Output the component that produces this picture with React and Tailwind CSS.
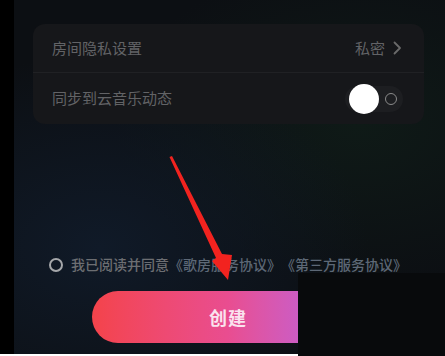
import React from 'react';

function Chevron() {
  return (
    <svg width="9" height="14" viewBox="0 0 9 14" fill="none">
      <path d="M1.5 1.5L7 7l-5.5 5.5" stroke="#6a6a6a" strokeWidth="1.8" strokeLinecap="round" strokeLinejoin="round" />
    </svg>
  );
}

function Toggle() {
  return (
    <div className="relative w-[58px] h-[26px] rounded-full bg-[#1d1e21] flex items-center justify-end pr-[6px]">
      <div className="absolute left-[4px] top-1/2 -translate-y-1/2 w-[30px] h-[30px] rounded-full bg-white" />
      <div className="w-[12px] h-[12px] rounded-full border-[1.8px] border-[#8a8a8a]" />
    </div>
  );
}

function Arrow() {
  return (
    <svg className="absolute left-0 top-0 pointer-events-none" width="445" height="356" viewBox="0 0 445 356">
      <polygon points="169.5,157 172,156 222,254 232,255 228,280 212,261 216,258" fill="#f2231f" />
    </svg>
  );
}

export default function App() {
  const font = { fontFamily: '"Noto Sans CJK SC", "Noto Sans", sans-serif' };

  return (
    <div className="relative w-[445px] h-[356px] overflow-hidden flex flex-col bg-white" style={font}>
      <div className="flex flex-1 min-h-0">
        <div className="w-[14px] bg-black" />
        <div className="flex-1 flex flex-col pl-[19px] pr-[21px] bg-[#0c0f13] bg-[radial-gradient(ellipse_at_20%_70%,#101a28_0%,transparent_55%),radial-gradient(ellipse_at_80%_35%,#0f1a17_0%,transparent_50%)]">
          <div className="mt-[24px] h-[100px] rounded-[12px] bg-[#16171a] flex flex-col">
            <div className="h-[49px] flex items-center justify-between pl-[19px] pr-[22px] border-b border-[#202124]">
              <span className="text-[15px] text-[#626366]">房间隐私设置</span>
              <div className="flex items-center gap-[8px]">
                <span className="text-[15px] text-[#626366]">私密</span>
                <Chevron />
              </div>
            </div>
            <div className="flex-1 flex items-center justify-between pl-[19px] pr-[21px]">
              <span className="text-[15px] text-[#626366]">同步到云音乐动态</span>
              <Toggle />
            </div>
          </div>

          <div className="mt-[130px] flex items-center pl-[16px] gap-[8px]">
            <div className="w-[14px] h-[14px] rounded-full border-2 border-[#a5a7aa]" />
            <span className="text-[14px] font-medium whitespace-nowrap text-[#6c6e72] [text-spacing-trim:space-all]">
              我已阅读并同意<span className="text-[#5d6876]">《歌房服务协议》《第三方服务协议》</span>
            </span>
          </div>

          <div className="mt-[16px] ml-[59px] w-[272px] h-[52px] rounded-full bg-gradient-to-r from-[#f4434a] via-[#e94d90] to-[#b25ff0] flex items-center justify-center">
            <span className="text-[18px] font-bold text-[#fae3ee] tracking-[1px]">创建</span>
          </div>
        </div>
      </div>
      <div className="h-[2px] bg-white" />

      <div className="absolute left-[298px] top-[273px] w-[147px] h-[83px] bg-[#080a0c]" />
      <Arrow />
    </div>
  );
}
